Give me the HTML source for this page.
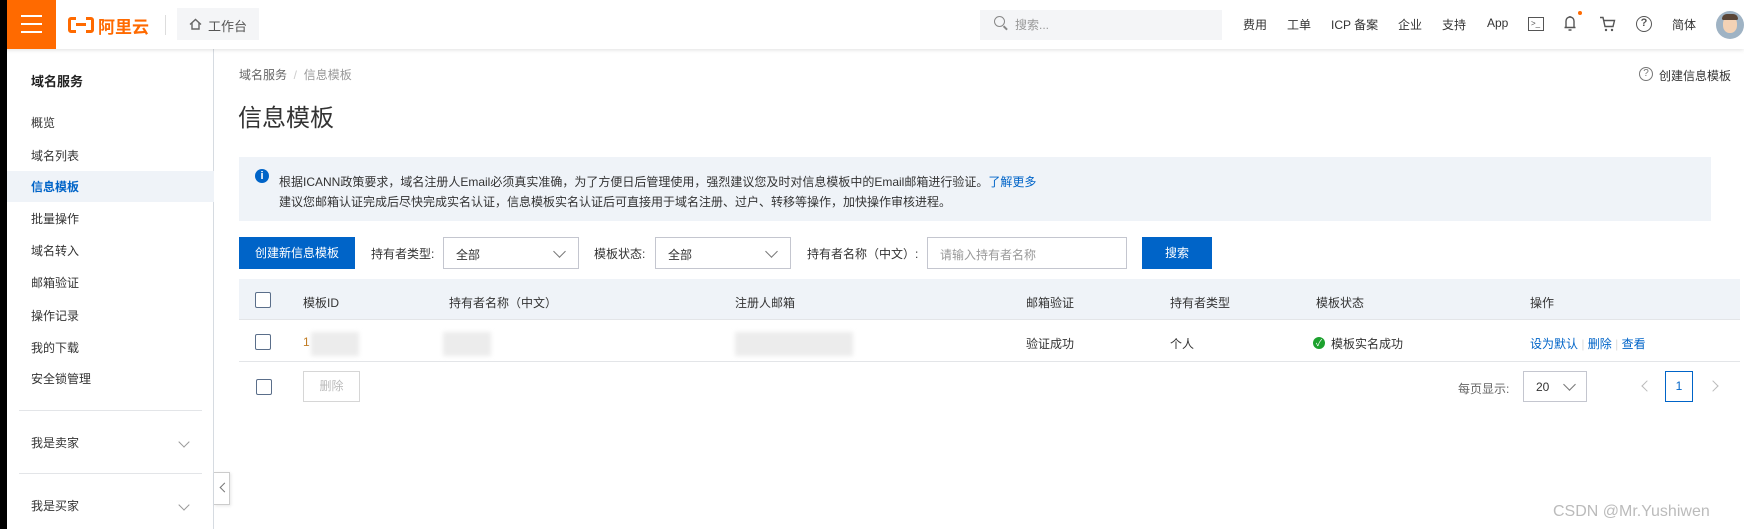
<!DOCTYPE html>
<html><head><meta charset="utf-8">
<style>
*{margin:0;padding:0;box-sizing:border-box}
body{width:1744px;height:529px;position:relative;overflow:hidden;background:#fff;font-family:"Liberation Sans","Noto Sans CJK SC",sans-serif;font-size:12px;color:#333}
.a{position:absolute;white-space:nowrap}
.hdr{left:0;top:0;width:1744px;height:49px;background:#fff;box-shadow:0 1px 4px rgba(0,0,0,.12);z-index:2}
.side{left:7px;top:49px;width:207px;height:480px;background:#fff;border-right:1px solid #d6dbe1}
.si{left:31px;font-size:12px;color:#333;line-height:16px}
.chk{width:16px;height:16px;border:1px solid #5a6e8a;border-radius:2px;background:#fff}
.sel{border:1px solid #c4c6cf;background:#fff;height:32px}
.sel span{position:absolute;left:12px;top:8px;font-size:12px;color:#333}
.sel i{position:absolute;right:14px;top:9px;width:9px;height:9px;border-right:1px solid #777;border-bottom:1px solid #777;transform:rotate(45deg)}
.th{top:294px;color:#333;font-size:12px}
.td{top:335px;color:#333;font-size:12px}
.blur{background:#ececec;filter:blur(2px)}
.nav{top:16px;font-size:12px;color:#333}
</style></head><body>
<div class="a" style="left:0;top:0;width:7px;height:529px;background:#000;z-index:3"></div>
<div class="a hdr">
 <div class="a" style="left:7px;top:0;width:49px;height:49px;background:#ff6a00">
  <div class="a" style="left:14px;top:15px;width:21px;height:2px;background:#fff"></div>
  <div class="a" style="left:14px;top:23px;width:21px;height:2px;background:#fff"></div>
  <div class="a" style="left:14px;top:31px;width:21px;height:2px;background:#fff"></div>
 </div>
 <div class="a" style="left:68px;top:17px;width:26px;height:16px;border:3px solid #ff6a00;border-radius:3px"></div>
 <div class="a" style="left:76px;top:13px;width:10px;height:24px;background:#fff"></div>
 <div class="a" style="left:76px;top:23px;width:10px;height:3px;background:#ff6a00"></div>
 <div class="a" style="left:98px;top:13px;font-size:17px;font-weight:bold;color:#ff6a00">阿里云</div>
 <div class="a" style="left:165px;top:15px;width:1px;height:20px;background:#ddd"></div>
 <div class="a" style="left:177px;top:8px;width:82px;height:32px;background:#f4f5f7"></div>
 <svg class="a" style="left:189px;top:18px" width="13" height="12" viewBox="0 0 13 12"><path d="M1 6.5L6.5 1.5 12 6.5M3 5v6h7V5" stroke="#666" stroke-width="1.4" fill="none"/></svg>
 <div class="a" style="left:208px;top:16px;font-size:13px;color:#555">工作台</div>
 <div class="a" style="left:980px;top:10px;width:242px;height:30px;background:#f4f5f7"></div>
 <div class="a" style="left:994px;top:16px;width:11px;height:11px;border:1.5px solid #888;border-radius:50%"></div>
 <div class="a" style="left:1003px;top:27px;width:5px;height:1.5px;background:#888;transform:rotate(45deg)"></div>
 <div class="a" style="left:1015px;top:16px;font-size:12px;color:#999">搜索...</div>
 <div class="a nav" style="left:1243px">费用</div>
 <div class="a nav" style="left:1287px">工单</div>
 <div class="a nav" style="left:1331px">ICP 备案</div>
 <div class="a nav" style="left:1398px">企业</div>
 <div class="a nav" style="left:1442px">支持</div>
 <div class="a nav" style="left:1487px">App</div>
 <div class="a" style="left:1528px;top:17px;width:16px;height:14px;border:1.5px solid #555"></div>
 <div class="a" style="left:1531px;top:19px;font-size:8px;color:#555">&gt;_</div>
 <svg class="a" style="left:1563px;top:14px" width="14" height="18" viewBox="0 0 14 18"><path d="M3 13V7a4 4 0 018 0v6M1.5 13.5h11M5.5 16h3M7 2v1" stroke="#555" stroke-width="1.4" fill="none"/></svg>
 <div class="a" style="left:1578px;top:11px;width:4px;height:4px;border-radius:50%;background:#ff6a00"></div>
 <svg class="a" style="left:1599px;top:16px" width="17" height="16" viewBox="0 0 17 16"><path d="M1 1.5h3l2 9h8l1.5-6H5" stroke="#555" stroke-width="1.4" fill="none"/><circle cx="7" cy="14" r="1.2" fill="#555"/><circle cx="13" cy="14" r="1.2" fill="#555"/></svg>
 <div class="a" style="left:1636px;top:16px;width:16px;height:16px;border:1.5px solid #555;border-radius:50%;font-size:11px;line-height:13px;text-align:center;color:#555;font-weight:bold">?</div>
 <div class="a nav" style="left:1672px">简体</div>
 <div class="a" style="left:1716px;top:11px;width:28px;height:28px;border-radius:50%;background:#9fb3c4;overflow:hidden"><div class="a" style="left:7px;top:5px;width:14px;height:17px;border-radius:45%;background:#f3d2b5"></div><div class="a" style="left:6px;top:3px;width:16px;height:6px;border-radius:8px 8px 2px 2px;background:#5a4536"></div></div>
</div>

<div class="a side">
 <div class="a" style="left:0;top:122px;width:207px;height:31px;background:#eff3f8"></div>
</div>
<div class="a si" style="top:74px;font-size:13px;font-weight:bold;color:#222">域名服务</div>
<div class="a si" style="top:115px">概览</div>
<div class="a si" style="top:148px">域名列表</div>
<div class="a si" style="top:179px;color:#0064c8;font-weight:bold">信息模板</div>
<div class="a si" style="top:211px">批量操作</div>
<div class="a si" style="top:243px">域名转入</div>
<div class="a si" style="top:275px">邮箱验证</div>
<div class="a si" style="top:308px">操作记录</div>
<div class="a si" style="top:340px">我的下载</div>
<div class="a si" style="top:371px">安全锁管理</div>
<div class="a" style="left:19px;top:410px;width:183px;height:1px;background:#e3e5e8"></div>
<div class="a si" style="top:435px">我是卖家</div>
<div class="a" style="left:180px;top:438px;width:8px;height:8px;border-right:1px solid #999;border-bottom:1px solid #999;transform:rotate(45deg)"></div>
<div class="a" style="left:19px;top:473px;width:183px;height:1px;background:#e3e5e8"></div>
<div class="a si" style="top:498px">我是买家</div>
<div class="a" style="left:180px;top:501px;width:8px;height:8px;border-right:1px solid #999;border-bottom:1px solid #999;transform:rotate(45deg)"></div>
<div class="a" style="left:214px;top:472px;width:16px;height:33px;background:#fff;border:1px solid #ccc;border-left:none;box-shadow:1px 1px 3px rgba(0,0,0,.1)"></div>
<div class="a" style="left:221px;top:484px;width:7px;height:7px;border-left:1px solid #777;border-bottom:1px solid #777;transform:rotate(45deg)"></div>

<div class="a" style="left:239px;top:66px;color:#666">域名服务&nbsp;&nbsp;<span style="color:#ccc">/</span>&nbsp;&nbsp;<span style="color:#999">信息模板</span></div>
<div class="a" style="left:1639px;top:67px;width:14px;height:14px;border:1px solid #777;border-radius:50%;font-size:10px;line-height:12px;text-align:center;color:#777">?</div>
<div class="a" style="left:1659px;top:67px;color:#333">创建信息模板</div>
<div class="a" style="left:238px;top:98px;font-size:24px;color:#333">信息模板</div>

<div class="a" style="left:239px;top:157px;width:1472px;height:64px;background:#eff3f8"></div>
<div class="a" style="left:255px;top:169px;width:14px;height:14px;border-radius:50%;background:#0064c8;color:#fff;font-size:11px;font-weight:bold;line-height:14px;text-align:center">i</div>
<div class="a" style="left:279px;top:173px">根据ICANN政策要求，域名注册人Email必须真实准确，为了方便日后管理使用，强烈建议您及时对信息模板中的Email邮箱进行验证。<span style="color:#0064c8">了解更多</span></div>
<div class="a" style="left:279px;top:193px">建议您邮箱认证完成后尽快完成实名认证，信息模板实名认证后可直接用于域名注册、过户、转移等操作，加快操作审核进程。</div>

<div class="a" style="left:239px;top:237px;width:116px;height:32px;background:#0064c8;color:#fff;text-align:center;line-height:32px">创建新信息模板</div>
<div class="a" style="left:371px;top:245px">持有者类型:</div>
<div class="a sel" style="left:443px;top:237px;width:136px"><span>全部</span><i></i></div>
<div class="a" style="left:594px;top:245px">模板状态:</div>
<div class="a sel" style="left:655px;top:237px;width:136px"><span>全部</span><i></i></div>
<div class="a" style="left:807px;top:245px">持有者名称（中文）:</div>
<div class="a sel" style="left:927px;top:237px;width:200px"><span style="color:#999">请输入持有者名称</span></div>
<div class="a" style="left:1142px;top:237px;width:70px;height:32px;background:#0064c8;color:#fff;text-align:center;line-height:32px">搜索</div>

<div class="a" style="left:239px;top:279px;width:1501px;height:41px;background:#eff3f8;border-bottom:1px solid #e3e5e8"></div>
<div class="a chk" style="left:255px;top:292px"></div>
<div class="a th" style="left:303px">模板ID</div>
<div class="a th" style="left:449px">持有者名称（中文）</div>
<div class="a th" style="left:735px">注册人邮箱</div>
<div class="a th" style="left:1026px">邮箱验证</div>
<div class="a th" style="left:1170px">持有者类型</div>
<div class="a th" style="left:1316px">模板状态</div>
<div class="a th" style="left:1530px">操作</div>

<div class="a" style="left:239px;top:361px;width:1501px;height:1px;background:#e3e5e8"></div>
<div class="a chk" style="left:255px;top:334px"></div>
<div class="a td" style="left:303px;color:#c07a20">1</div>
<div class="a blur" style="left:311px;top:332px;width:48px;height:24px"></div>
<div class="a blur" style="left:443px;top:332px;width:48px;height:24px"></div>
<div class="a blur" style="left:735px;top:332px;width:118px;height:24px"></div>
<div class="a td" style="left:1026px">验证成功</div>
<div class="a td" style="left:1170px">个人</div>
<div class="a" style="left:1313px;top:337px;width:12px;height:12px;border-radius:50%;background:#1ca12e;color:#fff;font-size:9px;line-height:12px;text-align:center">✓</div>
<div class="a td" style="left:1331px">模板实名成功</div>
<div class="a td" style="left:1530px;color:#0064c8">设为默认 <span style="color:#ddd">|</span> 删除 <span style="color:#ddd">|</span> 查看</div>

<div class="a chk" style="left:256px;top:379px"></div>
<div class="a" style="left:303px;top:371px;width:57px;height:31px;border:1px solid #d6d6d6;color:#bbb;text-align:center;line-height:29px">删除</div>
<div class="a" style="left:1458px;top:380px;color:#666">每页显示:</div>
<div class="a sel" style="left:1523px;top:371px;width:64px;height:31px"><span>20</span><i style="top:8px;right:12px"></i></div>
<div class="a" style="left:1643px;top:382px;width:8px;height:8px;border-left:1px solid #bbb;border-bottom:1px solid #bbb;transform:rotate(45deg)"></div>
<div class="a" style="left:1665px;top:371px;width:28px;height:31px;border:1px solid #0064c8;color:#0064c8;text-align:center;line-height:29px">1</div>
<div class="a" style="left:1709px;top:382px;width:8px;height:8px;border-right:1px solid #bbb;border-top:1px solid #bbb;transform:rotate(45deg)"></div>

<div class="a" style="left:1553px;top:503px;font-size:16px;color:#bbb">CSDN @Mr.Yushiwen</div>
</body></html>
